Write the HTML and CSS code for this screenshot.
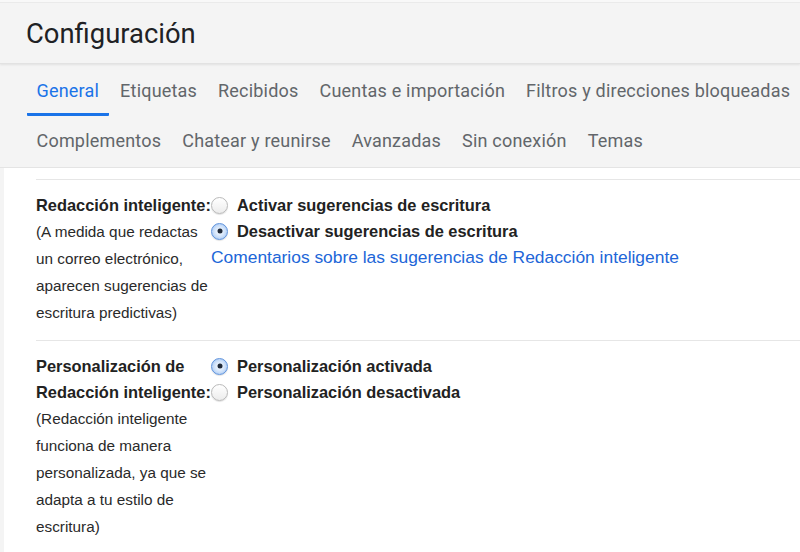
FILE: index.html
```html
<!DOCTYPE html>
<html lang="es">
<head>
	<meta charset="UTF-8">
	<title>Configuración</title>
	<link rel="stylesheet" href="styles.css">
</head>
<body>
	<div class="topline"></div>
	<header class="head">
		<h1>Configuración</h1>
	</header>

	<nav class="tabs">
		<ul class="tab-row">
			<li class="tab active">General</li>
			<li class="tab">Etiquetas</li>
			<li class="tab">Recibidos</li>
			<li class="tab">Cuentas e importación</li>
			<li class="tab">Filtros y direcciones bloqueadas</li>
		</ul>
		<ul class="tab-row">
			<li class="tab">Complementos</li>
			<li class="tab">Chatear y reunirse</li>
			<li class="tab">Avanzadas</li>
			<li class="tab">Sin conexión</li>
			<li class="tab">Temas</li>
		</ul>
	</nav>

	<main class="panel">
		<!-- Redacción inteligente -->
		<section class="setting">
			<div class="label">
				<b>Redacción inteligente:</b>
				<p>(A medida que redactas un correo electrónico, aparecen sugerencias de escritura predictivas)</p>
			</div>
			<div class="options">
				<label class="opt"><span class="radio"></span>Activar sugerencias de escritura</label>
				<label class="opt"><span class="radio on"></span>Desactivar sugerencias de escritura</label>
				<a class="link" href="#">Comentarios sobre las sugerencias de Redacción inteligente</a>
			</div>
		</section>

		<!-- Personalización -->
		<section class="setting">
			<div class="label">
				<b>Personalización de<br>Redacción inteligente:</b>
				<p>(Redacción inteligente funciona de manera personalizada, ya que se adapta a tu estilo de escritura)</p>
			</div>
			<div class="options">
				<label class="opt"><span class="radio on"></span>Personalización activada</label>
				<label class="opt"><span class="radio"></span>Personalización desactivada</label>
			</div>
		</section>
	</main>
</body>
</html>
```

FILE: styles.css
```css
* {
	margin: 0;
	padding: 0;
	box-sizing: border-box;
}
body {
	background: #f4f4f4;
	font-family: "Liberation Sans", Arial, sans-serif;
	overflow: hidden;
	width: 800px;
	height: 552px;
}
ul {
	list-style: none;
}

.topline {
	height: 3px;
	border-bottom: 1px solid #ebebeb;
	background: #f8f8f8;
}

/* cabecera */
.head {
	height: 61px;
	padding-left: 26px;
	display: flex;
	align-items: center;
	border-bottom: 1px solid #e2e2e2;
	box-shadow: 0 1px 2px rgba(0, 0, 0, .08);
}
.head h1 {
	font-family: Roboto, "Noto Sans", sans-serif;
	font-weight: 400;
	font-size: 27.4px;
	color: #202124;
	margin-top: 2px;
}

/* pestañas */
.tabs {
	padding-left: 27px;
	border-bottom: 1px solid #e4e4e4;
}
.tab-row {
	display: flex;
	gap: 0 2px;
}
.tab {
	font-family: Roboto, "Noto Sans", sans-serif;
	font-size: 18px;
	color: #62666a;
	line-height: 22px;
	padding: 16px 9.5px 11px;
	white-space: nowrap;
	border-bottom: 3px solid transparent;
	letter-spacing: .2px;
}
.tab-row + .tab-row .tab {
	padding-top: 14px;
	padding-bottom: 12px;
}
.tab.active {
	color: #1a73e8;
	border-bottom-color: #1a73e8;
	border-radius: 0 0 1px 1px;
}

/* contenido */
.panel {
	background: #fff;
	margin-left: 4px;
	height: 400px;
	padding-top: 11px;
}
.setting {
	display: flex;
	margin-left: 32px;
	border-top: 1px solid #e6e6e6;
	padding: 12px 0 14px;
}
.label {
	width: 175px;
	flex: none;
	color: #222;
}
.label b {
	display: block;
	font-size: 16.4px;
	line-height: 26px;
	white-space: nowrap;
}
.label p {
	font-size: 15.3px;
	line-height: 27px;
	color: #2a2a2a;
}
.options {
	display: flex;
	flex-direction: column;
	align-items: flex-start;
}
.opt {
	display: flex;
	align-items: center;
	font-size: 16.4px;
	font-weight: bold;
	line-height: 26px;
	color: #222;
	white-space: nowrap;
}
.radio {
	width: 17px;
	height: 17px;
	border-radius: 50%;
	margin-right: 9px;
	border: 1px solid #b9b9b9;
	background: linear-gradient(#ffffff, #ececec);
	box-shadow: 0 1px 1px rgba(0, 0, 0, .12);
	position: relative;
}
.radio.on {
	border-color: #5f93dc;
	background: radial-gradient(circle, #ffffff 0, #cfe2fa 50%, #94baf0 100%);
}
.radio.on::after {
	content: '';
	position: absolute;
	left: 50%;
	top: 50%;
	width: 5px;
	height: 5px;
	border-radius: 50%;
	background: #1f2a3a;
	transform: translate(-50%, -50%);
}
.link {
	font-size: 17.4px;
	line-height: 26px;
	color: #2166d8;
	text-decoration: none;
	white-space: nowrap;
}
```
